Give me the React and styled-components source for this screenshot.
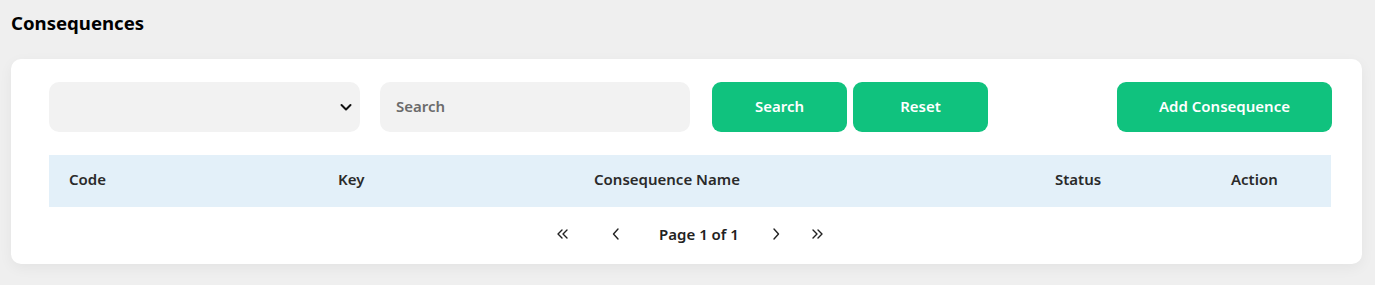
import React from "react";
import styled, { createGlobalStyle } from "styled-components";

const Global = createGlobalStyle`
  html, body { margin: 0; padding: 0; background: #efefef; }
  body { font-family: "Noto Sans", "Open Sans", sans-serif; color: #222; }
  * { box-sizing: border-box; }
`;

const Page = styled.div`
  padding: 10px 13px 20px 11px;
  background: #efefef;
  min-height: 285px;
`;

const Title = styled.h1`
  margin: 0 0 23px 0;
  font-size: 18.6px;
  line-height: 26px;
  font-weight: 700;
  color: #000;
`;

const Card = styled.div`
  background: #fff;
  border-radius: 10px;
  box-shadow: 0 4px 14px rgba(0, 0, 0, 0.05);
  padding: 23px 30px 0 38px;
  height: 205px;
`;

const Filters = styled.div`
  display: flex;
  align-items: center;
  height: 50px;
`;

const SelectBox = styled.div`
  width: 311px;
  height: 50px;
  background: #f2f2f2;
  border-radius: 10px;
  display: flex;
  align-items: center;
  justify-content: flex-end;
  padding-right: 6px;
  margin-right: 20px;
`;

const Input = styled.input`
  width: 310px;
  height: 50px;
  border: none;
  outline: none;
  background: #f2f2f2;
  border-radius: 10px;
  padding: 0 0 2px 16px;
  font-family: inherit;
  font-size: 15px;
  font-weight: 600;
  color: #333;
  margin-right: 22px;
  &::placeholder { color: #6b6b6b; }
`;

const Button = styled.button`
  width: ${(p) => p.$w}px;
  height: 50px;
  border: none;
  border-radius: 9px;
  background: #10c27e;
  color: #fff;
  font-family: inherit;
  font-size: 15px;
  font-weight: 600;
  padding: 0 0 2px 0;
  margin-right: ${(p) => p.$mr || 0}px;
  margin-left: ${(p) => (p.$push ? "auto" : "0")};
  cursor: pointer;
`;

const HeaderRow = styled.div`
  margin-top: 23px;
  height: 52px;
  background: #e3f0f9;
  display: grid;
  grid-template-columns: 269px 256px 461px 176px 1fr;
  align-items: center;
  padding: 0 0 4px 20px;
  margin-right: 1px;
`;

const HeadCell = styled.div`
  font-size: 15px;
  font-weight: 600;
  color: #2a2a2a;
`;

const Pager = styled.div`
  display: flex;
  align-items: center;
  justify-content: center;
  height: 57px;
  padding: 0 0 4px 0;
  margin-right: 1px;
`;

const PagerBtn = styled.span`
  display: inline-flex;
  align-items: center;
  justify-content: center;
  width: 14px;
  height: 20px;
  margin-left: ${(p) => p.$ml || 0}px;
`;

const PageText = styled.span`
  font-size: 15px;
  font-weight: 600;
  color: #222;
  margin-left: ${(p) => p.$ml || 0}px;
`;

const Chevron = ({ dir = "right", dbl }) => {
  const d = dir === "right";
  return (
    <svg width="14" height="14" viewBox="0 0 14 14" fill="none" stroke="#222" strokeWidth="1.4" strokeLinecap="round" strokeLinejoin="round">
      {dbl ? (
        d ? (
          <>
            <polyline points="2,3 6,7 2,11" />
            <polyline points="7,3 11,7 7,11" />
          </>
        ) : (
          <>
            <polyline points="7,3 3,7 7,11" />
            <polyline points="12,3 8,7 12,11" />
          </>
        )
      ) : d ? (
        <polyline points="5,2 9.5,7 5,12" />
      ) : (
        <polyline points="9,2 4.5,7 9,12" />
      )}
    </svg>
  );
};

export default function App() {
  return (
    <>
      <Global />
      <Page>
        <Title>Consequences</Title>
        <Card>
          <Filters>
            <SelectBox>
              <svg width="16" height="16" viewBox="0 0 16 16" fill="none" stroke="#111" strokeWidth="2" strokeLinecap="round" strokeLinejoin="round">
                <polyline points="3.5,6 8,10.5 12.5,6" />
              </svg>
            </SelectBox>
            <Input placeholder="Search" />
            <Button $w={135} $mr={6}>Search</Button>
            <Button $w={135}>Reset</Button>
            <Button $w={215} $push>Add Consequence</Button>
          </Filters>
          <HeaderRow>
            <HeadCell>Code</HeadCell>
            <HeadCell>Key</HeadCell>
            <HeadCell>Consequence Name</HeadCell>
            <HeadCell>Status</HeadCell>
            <HeadCell>Action</HeadCell>
          </HeaderRow>
          <Pager>
            <PagerBtn><Chevron dir="left" dbl /></PagerBtn>
            <PagerBtn $ml={40}><Chevron dir="left" /></PagerBtn>
            <PageText $ml={36}>Page 1 of 1</PageText>
            <PagerBtn $ml={30}><Chevron dir="right" /></PagerBtn>
            <PagerBtn $ml={28}><Chevron dir="right" dbl /></PagerBtn>
          </Pager>
        </Card>
      </Page>
    </>
  );
}
